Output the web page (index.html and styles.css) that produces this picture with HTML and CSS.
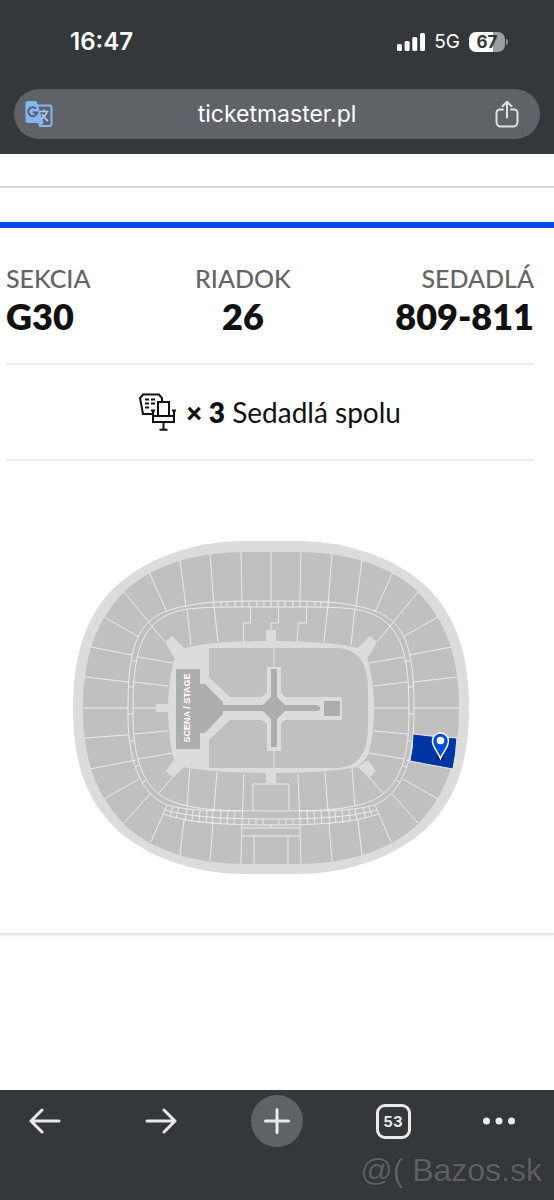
FILE: index.html
```
<!DOCTYPE html>
<html lang="sk">
<head>
    <meta charset="UTF-8">
    <meta name="viewport" content="width=device-width, initial-scale=1">
    <title>ticketmaster.pl</title>
    <link rel="stylesheet" href="styles.css">
</head>
<body>
    <header class="top">
        <div class="status">
            <span class="time">16:47</span>
            <div class="status-right">
                <svg class="signal" width="28" height="18" viewBox="0 0 28 18" fill="#fff" aria-hidden="true">
                    <rect x="0" y="11" width="5" height="7" rx="1.5"/>
                    <rect x="7.6" y="8" width="5" height="10" rx="1.5"/>
                    <rect x="15.3" y="4" width="5" height="14" rx="1.5"/>
                    <rect x="23" y="0" width="5" height="18" rx="1.5"/>
                </svg>
                <span class="net">5G</span>
                <span class="battery">67</span>
            </div>
        </div>
        <div class="address">
            <button class="icon-btn" type="button" aria-label="Preložiť">
                <svg width="28" height="28" viewBox="0 0 28 28" aria-hidden="true">
                    <path d="M12 5.5h12.5a2 2 0 0 1 2 2v16.500a2 2 0 0 1-2 2H15z" fill="none" stroke="#85b4f8" stroke-width="2"/>
                    <path d="M2.5 1H10a2 2 0 0 1 2 1.4L18.5 23H2.5a2 2 0 0 1-2-2V3a2 2 0 0 1 2-2z" fill="#85b4f8"/>
                    <path d="M13 23h5.5L14.5 27z" fill="#85b4f8"/>
                    <path d="M11 8.500a4.500 4.500 0 1 0 1.200 4H7.800" fill="none" stroke="#5b6065" stroke-width="2"/>
                    <path d="M14.5 11.5h9M18.7 9.5v2M22 11.500c-.8 3.500-3 6-6 8M17 14c1.200 3 3.500 5 6 7" fill="none" stroke="#a9cbfb" stroke-width="1.7"/>
                </svg>
            </button>
            <button class="url" type="button">ticketmaster.pl</button>
            <button class="icon-btn" type="button" aria-label="Zdieľať">
                <svg width="24" height="28" viewBox="0 0 24 28" fill="none" stroke="#dfe1e4" stroke-width="2" stroke-linecap="round" stroke-linejoin="round" aria-hidden="true">
                    <path d="M8 9.5H5a3.500 3.500 0 0 0-3.500 3.500v9A4.500 4.500 0 0 0 6 26.500h12a4.500 4.500 0 0 0 4.500-4.500v-9A3.500 3.500 0 0 0 19 9.500h-3"/>
                    <path d="M12 17.5V2M7.5 6.300 12 1.800l4.500 4.500"/>
                </svg>
            </button>
        </div>
    </header>

    <main class="ticket">
        <div class="stripe"></div>
        <dl class="seat-info">
            <div class="seat-item">
                <dt>SEKCIA</dt>
                <dd>G30</dd>
            </div>
            <div class="seat-item center">
                <dt>RIADOK</dt>
                <dd>26</dd>
            </div>
            <div class="seat-item right">
                <dt>SEDADLÁ</dt>
                <dd>809-811</dd>
            </div>
        </dl>
        <p class="together">
            <svg width="37" height="38" viewBox="0 0 37 38" fill="none" stroke="#111" stroke-width="2" aria-hidden="true">
                <path d="M13 21H4L1 5l3-3.500h16L23 5v3"/>
                <path d="M6 6.5h4M12 6.5h4M6 10.5h4M12 10.5h4M6 14.5h4"/>
                <path d="M19 23V9h11v14M12 17.5h4M14 17.5V23M33 17.5h4M35 17.5V23M14 23h21v6H14zM24.5 29v8M20.5 36.800h8"/>
            </svg>
            <span><strong>× 3</strong> Sedadlá spolu</span>
        </p>

        <div class="map">
            <svg viewBox="65 535 410 345" role="img" aria-label="Mapa štadióna, sekcia G30">
                <defs>
                    <g id="half">
                        <!-- walkway between the tiers -->
                        <path d="M128 708C128 640 139 614 186 606C205 602 220 601 271 601"/>
                        <path d="M133 708C133 645 144 616 188 609C207 607 220 607 271 607"/>
                        <path d="M128 708C127 758 139 793 167 805"/>
                        <path d="M133 708C132 772 149 799 188 806C205 810 225 811 271 811"/>
                        <!-- upper tier -->
                        <path d="M83 708H128M85 677L128 682M91 647L132 655M104 617L139 637M124 592L165 642M149 572L167 612M180 560L186 607M210 554L214 606M241 552L242 601"/>
                        <path d="M85 738L128 735M90 769L136 760M104 799L139 779M124 823L150 794M151 842L167 805M180 855L184 820M210 861L213 823M241 864L242 825"/>
                        <!-- lower tier -->
                        <path d="M133 708H168M134 682L168 686M138 657L173 663M187 609L191 645M214 606L218 642"/>
                        <path d="M134 734L168 731M138 759L173 753M159 793L173 777M190 768L187 806M217 772L214 810M244 774L242 825"/>
                        <path d="M129 687h5M132 661h5M128 714h5M130 741h4M136 767l4-2M142 783l4-3"/>
                        <!-- small boxes -->
                        <path d="M167 805C188 811 215 811 242 811M165 810C188 816 215 819 271 819M163 814C188 822 215 825 271 825"/>
                        <path d="M173 807l-3 9M179 808l-3 10M187 809l-2 12M193 810l-1 12M200 810l-1 13M207 811l-1 12M213 811l-1 13M221 811l-1 13M228 811l-1 13M235 811l-1 13M249 819v6M256 819v6M263 819v6"/>
                        <path d="M221 601v6M227 601v6M235 601v6M242 601v6M249 601v6M257 601v6M264 601v6"/>
                        <path d="M271 828H242M271 836H242M254 836V864M253 811V784H271"/>
                    </g>
                    <g id="exits">
                        <path d="M165 642L172 636L184 648L175 659z"/>
                        <path d="M166 771L173 778L184 767L174 760z"/>
                    </g>
                </defs>
                <path fill="#dcdcdc" d="M73 708C73 652 87 614 116 586C145 560 190 541 245 541H297C352 541 397 560 426 586C455 614 469 652 469 708S455 801 426 829C397 855 352 874 297 874H245C190 874 145 855 116 829C87 801 73 764 73 708z"/>
                <path fill="#c0c0c0" d="M83 708C83 655 97 620 124 592C150 566 195 552 245 552H297C347 552 392 566 418 592C445 620 459 655 459 708S445 796 418 824C392 850 347 864 297 864H245C195 864 150 850 124 824C97 796 83 761 83 708z"/>
                <g fill="none" stroke="#ececec" stroke-width="1">
                    <use href="#half"/>
                    <use href="#half" transform="translate(542) scale(-1 1)"/>
                    <path d="M271 552V607M271 825v3"/>
                    <path d="M250.5 607V623H243.5V642M278.5 607V623H271V631M306.5 607V623H298.5L297 642"/>
                </g>

                <!-- arena floor -->
                <path fill="#dcdcdc" d="M168 708C168 690 171 670 175 657L184 648C210 642 240 641 271 641S340 643 358 648L367 657C372 675 374 690 374 708S372 745 367 757L358 767C335 771 305 773 271 773S205 771 182 767L174 760C170 745 168 725 168 708z"/>
                <g fill="#dcdcdc">
                    <use href="#exits"/>
                    <use href="#exits" transform="translate(542) scale(-1 1)"/>
                    <path d="M266 630h10v15h-10zM266 770h10v13h-10zM156 704h14v8h-14z"/>
                </g>
                <path fill="#c0c0c0" d="M209 648H335C356 648 368 660 368 690V726C368 756 356 768 335 768H209z"/>
                <path stroke="#e4e4e4" d="M274 648V768"/>
                <path fill="#dcdcdc" d="M208 676L230 697H262L267 692V667H281V692L285 697H342V720H285L281 724V751H267V724L262 720H230L208 741z"/>
                <path fill="#adadad" d="M176 669H200V684H205L223 702V705H263L271 697V669H277V697L285 705H317L320 707V710L317 711H285L277 719V747H271V719L263 711H223V714L205 733H200V749H176z"/>
                <path fill="#adadad" d="M324 701h16v15h-16z"/>
                <text class="stage-name" x="187" y="708" transform="rotate(-90 187 708)" dominant-baseline="central">SCENA / STAGE</text>

                <path fill="#0036a3" stroke="#e8e8e8" stroke-width="1" d="M413 734Q435 737 457 738Q456 755 453 769Q430 765 410 761Q413 748 413 734z"/>
                <ellipse cx="440" cy="758" rx="4" ry="2" fill="#002060"/>
                <path fill="#024ddf" stroke="#fff" stroke-width="1.5" d="M440.5 758.5C438 752 432.5 747 432.5 741A8 8 0 0 1 448.5 741C448.5 747 443 752 440.5 758.5z"/>
                <circle cx="440.5" cy="740.5" r="3.8" fill="#fff"/>
            </svg>
        </div>
    </main>

    <nav class="toolbar" aria-label="Prehliadač">
        <button type="button" aria-label="Späť">
            <svg width="32" height="26" viewBox="0 0 32 26" aria-hidden="true"><path d="M30 13H2M13 2 2 13l11 11"/></svg>
        </button>
        <button type="button" aria-label="Dopredu">
            <svg width="32" height="26" viewBox="0 0 32 26" aria-hidden="true"><path d="M2 13h28M19 2l11 11-11 11"/></svg>
        </button>
        <button class="new-tab" type="button" aria-label="Nová karta">
            <svg width="26" height="26" viewBox="0 0 26 26" aria-hidden="true"><path d="M13 1.5v23M1.5 13h23"/></svg>
        </button>
        <button type="button" aria-label="Karty: 53"><span class="tabs">53</span></button>
        <button class="more" type="button" aria-label="Viac">
            <svg width="32" height="8" viewBox="0 0 32 8" aria-hidden="true"><circle cx="3.5" cy="4" r="3.5"/><circle cx="16" cy="4" r="3.5"/><circle cx="28.5" cy="4" r="3.5"/></svg>
        </button>
        <span class="watermark">@( Bazos.sk</span>
    </nav>
</body>
</html>
```
FILE: styles.css
```
* {
    box-sizing: border-box;
    margin: 0;
    padding: 0;
}
body {
    display: flex;
    flex-direction: column;
    min-height: 100vh;
    background-color: #fff;
    color: #111;
    font-family: Lato, "Liberation Sans", sans-serif;
}
button {
    border: 0;
    background: none;
    color: inherit;
    font: inherit;
    cursor: pointer;
}
svg {
    display: block;
}

/* browser header */
.top {
    padding: 0 14px 15px;
    background-color: #34383b;
    color: #fff;
    font-family: Inter, "Liberation Sans", sans-serif;
}
.status {
    display: flex;
    justify-content: space-between;
    align-items: center;
    height: 89px;
    padding: 0 35px 6px 56px;
}
.time {
    font-size: 24px;
    font-weight: 600;
}
.status-right {
    display: flex;
    align-items: center;
    gap: 9px;
}
.net {
    font-size: 19px;
}
.battery {
    position: relative;
    width: 36px;
    border-radius: 7px;
    background: linear-gradient(to right, #fff 67%, #9c9ea0 67%);
    color: #34383b;
    font-size: 17px;
    font-weight: 700;
    line-height: 20px;
    text-align: center;
}
.battery::after {
    content: "";
    position: absolute;
    top: 7px;
    right: -3px;
    width: 2px;
    height: 6px;
    border-radius: 0 2px 2px 0;
    background-color: #8a8d8f;
}
.address {
    display: flex;
    justify-content: space-between;
    align-items: center;
    height: 50px;
    padding: 0 21px 0 11px;
    border-radius: 25px;
    background-color: #5f6367;
}
.icon-btn {
    flex: none;
}
.url {
    flex: 1;
    padding-left: 6px;
    font-size: 23px;
}

/* ticket */
.ticket {
    flex: 1;
    padding-top: 32px;
}
.stripe {
    height: 42px;
    border-top: 2px solid #d9d9d9;
    border-bottom: 6px solid #024ddf;
}
.seat-info {
    display: flex;
    justify-content: space-between;
    margin: 0 20px 0 6px;
    padding: 35px 0 24px;
    border-bottom: 2px solid #ebebeb;
}
.center {
    text-align: center;
}
.right {
    text-align: right;
}
.seat-item dt {
    color: #646464;
    font-size: 25px;
    font-weight: 500;
    line-height: 30px;
}
.seat-item dd {
    font-size: 36px;
    font-weight: 800;
    line-height: 46px;
}
.together {
    display: flex;
    justify-content: center;
    align-items: center;
    gap: 10px;
    height: 96px;
    margin: 0 20px 0 6px;
    border-bottom: 2px solid #ebebeb;
    font-size: 28px;
}
.together strong {
    font-weight: 800;
}
.map {
    padding: 74px 0 53px;
    border-bottom: 2px solid #e6e6e6;
    box-shadow: 0 1px 2px #eee;
}
.map svg {
    width: 74%;
    margin: 0 auto 0 65px;
}
.stage-name {
    fill: #fff;
    font-family: "Liberation Sans", sans-serif;
    font-size: 9px;
    font-weight: 700;
    text-anchor: middle;
}

/* browser toolbar */
.toolbar {
    position: relative;
    display: flex;
    justify-content: space-between;
    align-items: flex-start;
    height: 110px;
    padding: 5px 39px 0 19px;
    background-color: #34383b;
    color: #e8eaed;
}
.toolbar button {
    display: flex;
    justify-content: center;
    align-items: center;
    width: 52px;
    height: 52px;
}
.toolbar .more {
    width: 32px;
}
.toolbar path {
    fill: none;
    stroke: #e8eaed;
    stroke-width: 3;
    stroke-linecap: round;
    stroke-linejoin: round;
}
.toolbar circle {
    fill: #e8eaed;
}
.toolbar .new-tab {
    border-radius: 50%;
    background-color: #5f6367;
}
.tabs {
    width: 35px;
    border: 3px solid #e8eaed;
    border-radius: 9px;
    font-family: Inter, "Liberation Sans", sans-serif;
    font-size: 15px;
    font-weight: 700;
    line-height: 29px;
}
.watermark {
    position: absolute;
    right: 12px;
    bottom: 12px;
    color: #5e6062;
    font-family: "Liberation Sans", sans-serif;
    font-size: 32px;
    line-height: 36px;
    text-shadow: 0 0 1px #1c1e20;
}
```
